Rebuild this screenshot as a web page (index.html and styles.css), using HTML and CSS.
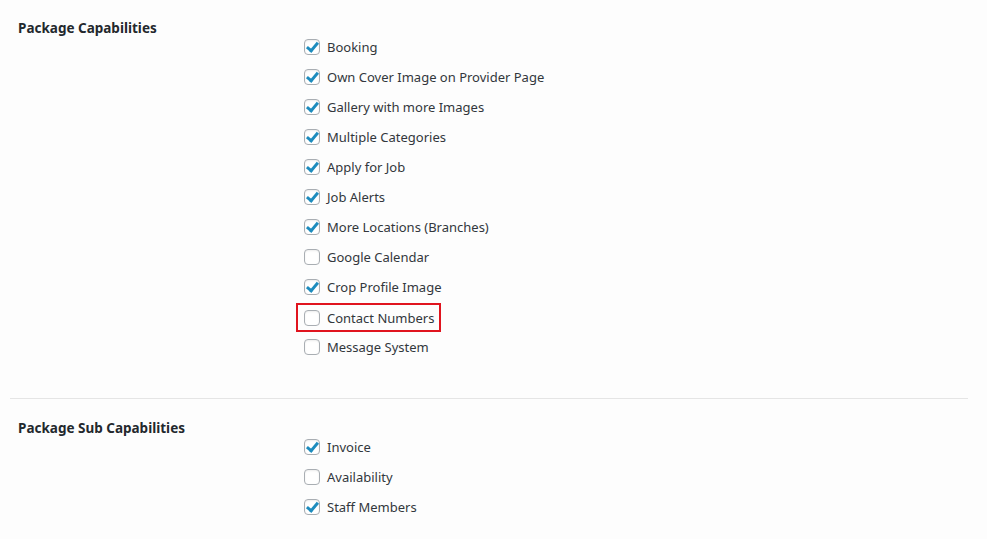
FILE: index.html
```html
<!DOCTYPE html>
<html>
<head>
<meta charset="utf-8">
<link rel="stylesheet" href="styles.css">
</head>
<body>
<div class="page">
  <section class="group">
    <h3 class="label">Package Capabilities</h3>
    <ul class="options">
      <li class="opt"><span class="box on"></span>Booking</li>
      <li class="opt"><span class="box on"></span>Own Cover Image on Provider Page</li>
      <li class="opt"><span class="box on"></span>Gallery with more Images</li>
      <li class="opt"><span class="box on"></span>Multiple Categories</li>
      <li class="opt"><span class="box on"></span>Apply for Job</li>
      <li class="opt"><span class="box on"></span>Job Alerts</li>
      <li class="opt"><span class="box on"></span>More Locations (Branches)</li>
      <li class="opt"><span class="box"></span>Google Calendar</li>
      <li class="opt"><span class="box on"></span>Crop Profile Image</li>
      <li class="opt highlight"><span class="box"></span>Contact Numbers</li>
      <li class="opt"><span class="box"></span>Message System</li>
    </ul>
  </section>
  <hr class="sep">
  <section class="group second">
    <h3 class="label">Package Sub Capabilities</h3>
    <ul class="options sub">
      <li class="opt"><span class="box on"></span>Invoice</li>
      <li class="opt"><span class="box"></span>Availability</li>
      <li class="opt"><span class="box on"></span>Staff Members</li>
    </ul>
  </section>
</div>
</body>
</html>
```
FILE: styles.css
```css
html, body {
  margin: 0;
  padding: 0;
  background: #fdfdfd;
}
body {
  font-family: "Noto Sans", "Open Sans", sans-serif;
  color: #32373c;
  font-size: 13px;
}
.page {
  padding: 20px 20px 0 18px;
}
.group {
  display: flex;
  flex-direction: column;
}
.label {
  margin: 0;
  font-size: 13.5px;
  font-weight: 700;
  color: #23282d;
  line-height: 16px;
}
.options {
  list-style: none;
  margin: 1px 0 0 286px;
  padding: 0;
  display: flex;
  flex-direction: column;
  gap: 10px;
}
.options.sub {
  margin-top: 1px;
}
.opt {
  display: flex;
  align-items: center;
  height: 20px;
  line-height: 20px;
  gap: 7px;
  position: relative;
  width: max-content;
  padding: 0 5px 0 6px;
  margin-left: -6px;
}
.box {
  width: 14px;
  height: 14px;
  border: 1px solid #a9aeb3;
  border-radius: 4px;
  background: #fff;
  box-shadow: inset 0 1px 2px rgba(0,0,0,0.08);
  position: relative;
  flex: none;
}
.box.on::after {
  content: "";
  position: absolute;
  left: 4px;
  top: 0px;
  width: 4px;
  height: 9px;
  border: solid #1e8cbe;
  border-width: 0 3px 3px 0;
  transform: rotate(40deg);
}
.highlight {
  outline: 2px solid #e0141e;
  outline-offset: 0;
  height: 25px;
  margin-top: -2px;
  margin-bottom: -3px;
}
.sep {
  border: 0;
  border-top: 1px solid #e5e5e5;
  margin: 41px -1px 0 -8px;
}
.second {
  padding-top: 21px;
}
```
